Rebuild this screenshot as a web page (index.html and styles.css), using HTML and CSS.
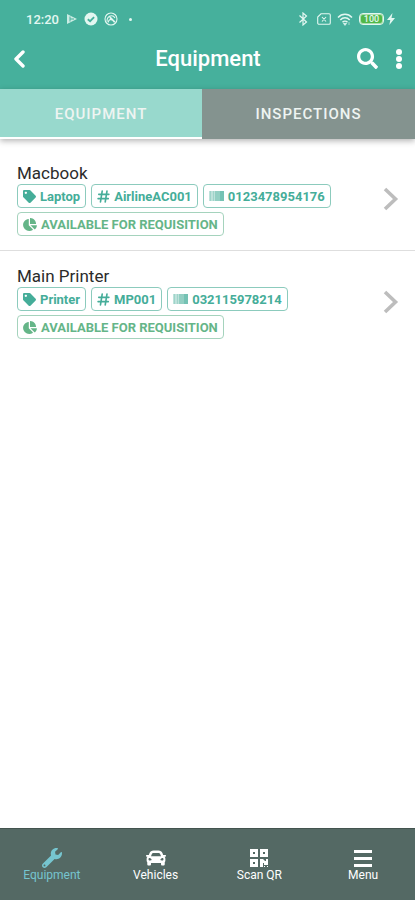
FILE: index.html
```html
<!DOCTYPE html>
<html lang="en">
<head>
<meta charset="utf-8">
<meta name="viewport" content="width=device-width, initial-scale=1">
<title>Equipment</title>
<link rel="stylesheet" href="styles.css">
</head>
<body>
<svg class="sprite" aria-hidden="true">
  <symbol id="tag" viewBox="0 0 512 512"><path d="M0 252.118V48C0 21.49 21.49 0 48 0h204.118a48 48 0 0 1 33.941 14.059l211.882 211.882c18.745 18.745 18.745 49.137 0 67.882L293.823 497.941c-18.745 18.745-49.137 18.745-67.882 0L14.059 286.059A48 48 0 0 1 0 252.118zM112 64c-26.51 0-48 21.49-48 48s21.49 48 48 48 48-21.49 48-48-21.49-48-48-48z"/></symbol>
  <symbol id="hash" viewBox="0 0 12 12"><path d="M4.8 1 3.2 11M9.2 1 7.6 11M1.6 4h9.4M1 8h9.4" fill="none" stroke="currentColor" stroke-width="1.5" stroke-linecap="round"/></symbol>
  <symbol id="barcode" viewBox="0 0 15 10"><path d="M0 0h15v10H0z" opacity=".35"/><path d="M1 0h1v10H1zM4 0h1v10H4z" opacity=".25"/><path d="M6 0h5v10H6z" opacity=".35"/><path d="M11 0h4v10h-4z" opacity=".6"/></symbol>
  <symbol id="pie" viewBox="0 0 544 512"><path d="M527.79 288H290.5l158.03 158.03c6.04 6.04 15.98 6.53 22.19.68 38.7-36.46 65.32-85.61 73.13-140.86 1.34-9.46-6.51-17.85-16.06-17.85zm-15.83-64.8C503.72 103.74 408.26 8.28 288.8.04 279.68-.59 272 7.1 272 16.24V240h223.77c9.14 0 16.82-7.68 16.19-16.8zM224 288V50.71c0-9.55-8.39-17.4-17.84-16.06C86.99 51.49-4.1 155.6.14 280.37 4.5 408.51 114.83 513.59 243.03 511.98c50.4-.63 96.97-16.87 135.26-44.03 7.9-5.6 8.42-17.23 1.57-24.08L224 288z"/></symbol>
  <symbol id="next" viewBox="0 0 16 24"><path d="M2 2l10.500 10L2 22" fill="none" stroke="currentColor" stroke-width="3.600"/></symbol>
</svg>
<div class="app">
  <header class="header">
    <div class="status">
      <span class="clock">12:20</span>
      <svg class="s-play" viewBox="0 0 12 12"><path d="M1 1l10 5-10 5z" opacity=".85"/><path d="M4 3.500v5M4 6h4" stroke="#46b09c" fill="none"/></svg>
      <svg class="s-disc" viewBox="0 0 14 14"><circle cx="7" cy="7" r="6.500"/><path d="M3.800 7.200l2.300 2 4-4" fill="none" stroke="#46b09c" stroke-width="1.800"/></svg>
      <svg class="s-disc" viewBox="0 0 14 14"><g fill="none" stroke="currentColor" stroke-width="1.100"><circle cx="7" cy="7" r="6"/><path d="M3 9.500C3 3 9 2.500 11 6M5 4l6 6M4 10.500c1-4 4-4 6.500 0"/></g><circle cx="7" cy="7" r="1.300"/></svg>
      <span class="dot"></span>
      <span class="spacer"></span>
      <svg class="s-bt" viewBox="0 0 10 14"><path d="M1.500 3.500l7 6.500L5 13V1l3.500 3-7 6.500" fill="none" stroke="currentColor" stroke-width="1.200"/></svg>
      <svg class="s-sim" viewBox="0 0 14 12"><path d="M4 .8h8a1.300 1.300 0 0 1 1.300 1.300v7.800a1.300 1.300 0 0 1-1.300 1.300H2A1.300 1.300 0 0 1 .7 9.900V4zM5 4l4 4.500M9 4L5 8.500" fill="none" stroke="currentColor" stroke-width="1.100"/></svg>
      <svg class="s-wifi" viewBox="0 0 16 13"><path d="M1 4.500C5 .3 11 .3 15 4.500M3.300 7c2.700-2.900 6.700-2.900 9.400 0M5.500 9.300c1.500-1.500 3.500-1.500 5 0" fill="none" stroke="currentColor" stroke-width="1.500"/><path d="M6.300 10.300h3.400L8 12.500zM12 9v3" stroke="currentColor" stroke-width=".6"/></svg>
      <span class="battery">100</span>
      <svg class="s-bolt" viewBox="0 0 8 12"><path d="M5.500 0L0 7h3.300L2.300 12 8 5H4.500z"/></svg>
    </div>
    <div class="bar">
      <button class="icon-btn back" aria-label="Back"><svg viewBox="0 0 12 18"><path d="M10 2L3 9l7 7" fill="none" stroke="currentColor" stroke-width="3.400" stroke-linecap="round" stroke-linejoin="round"/></svg></button>
      <h1>Equipment</h1>
      <div class="actions">
        <button class="icon-btn search" aria-label="Search"><svg viewBox="0 0 512 512"><path d="M505 442.700L405.300 343c-4.500-4.500-10.600-7-17-7H372c27.600-35.300 44-79.700 44-128C416 93.100 322.900 0 208 0S0 93.100 0 208s93.100 208 208 208c48.300 0 92.700-16.400 128-44v16.300c0 6.400 2.500 12.500 7 17l99.700 99.700c9.400 9.400 24.600 9.400 33.900 0l28.300-28.300c9.400-9.400 9.400-24.600.1-34zM208 336c-70.700 0-128-57.200-128-128 0-70.700 57.200-128 128-128 70.700 0 128 57.200 128 128 0 70.700-57.200 128-128 128z"/></svg></button>
        <button class="icon-btn more" aria-label="More"><svg viewBox="0 0 8 20"><circle cx="4" cy="3" r="3"/><circle cx="4" cy="10" r="3"/><circle cx="4" cy="17" r="3"/></svg></button>
      </div>
    </div>
  </header>
  <nav class="tabs">
    <button class="tab active">EQUIPMENT</button>
    <button class="tab">INSPECTIONS</button>
  </nav>
  <main class="list">
    <a class="item" href="#macbook">
      <div class="info">
        <h2>Macbook</h2>
        <div class="chips">
          <span class="chip"><svg class="i-tag"><use href="#tag"/></svg>Laptop</span>
          <span class="chip"><svg class="i-hash"><use href="#hash"/></svg>AirlineAC001</span>
          <span class="chip"><svg class="i-bar"><use href="#barcode"/></svg>0123478954176</span>
          <span class="chip available"><svg class="i-pie"><use href="#pie"/></svg>AVAILABLE FOR REQUISITION</span>
        </div>
      </div>
      <svg class="next"><use href="#next"/></svg>
    </a>
    <a class="item" href="#printer">
      <div class="info">
        <h2>Main Printer</h2>
        <div class="chips">
          <span class="chip"><svg class="i-tag"><use href="#tag"/></svg>Printer</span>
          <span class="chip"><svg class="i-hash"><use href="#hash"/></svg>MP001</span>
          <span class="chip"><svg class="i-bar"><use href="#barcode"/></svg>032115978214</span>
          <span class="chip available"><svg class="i-pie"><use href="#pie"/></svg>AVAILABLE FOR REQUISITION</span>
        </div>
      </div>
      <svg class="next"><use href="#next"/></svg>
    </a>
  </main>
  <nav class="bottom">
    <a class="current" href="#equipment"><svg viewBox="0 0 512 512"><path d="M507.730 109.100c-2.240-9.030-13.540-12.090-20.120-5.510l-74.360 74.360-67.880-11.310-11.310-67.880 74.360-74.360c6.620-6.620 3.430-17.900-5.660-20.160-47.380-11.740-99.550.91-136.580 37.930-39.640 39.640-50.550 97.100-34.050 147.200L18.740 402.760c-24.990 24.990-24.990 65.510 0 90.500 24.990 24.990 65.510 24.990 90.500 0l213.210-213.210c50.120 16.710 107.470 5.680 147.370-34.220 37.070-37.070 49.700-89.320 37.910-136.730zM64 472c-13.250 0-24-10.750-24-24 0-13.260 10.750-24 24-24s24 10.740 24 24c0 13.250-10.750 24-24 24z"/></svg><span>Equipment</span></a>
    <a href="#vehicles"><svg viewBox="0 0 512 512"><path d="M499.990 176h-59.870l-16.640-41.600C406.380 91.630 365.570 64 319.500 64h-127c-46.060 0-86.880 27.630-103.990 70.400L71.870 176H12.010C4.200 176-1.530 183.340.37 190.910l6 24C7.700 220.250 12.500 224 18.010 224h20.070C24.650 235.730 16 252.780 16 272v48c0 16.120 6.160 30.670 16 41.930V416c0 17.670 14.330 32 32 32h32c17.670 0 32-14.330 32-32v-32h256v32c0 17.670 14.330 32 32 32h32c17.670 0 32-14.330 32-32v-54.070c9.840-11.250 16-25.800 16-41.930v-48c0-19.220-8.650-36.270-22.070-48H494c5.510 0 10.310-3.750 11.640-9.090l6-24c1.890-7.570-3.840-14.910-11.650-14.910zm-352.060-17.830c7.290-18.220 24.940-30.170 44.570-30.170h127c19.630 0 37.280 11.950 44.570 30.170L384 208H128l19.930-49.830zM96 319.800c-19.200 0-32-12.760-32-31.900S76.800 256 96 256s48 28.710 48 47.850-28.800 15.950-48 15.950zm320 0c-19.200 0-48 3.190-48-15.950S396.800 256 416 256s32 12.760 32 31.900-12.800 31.900-32 31.900z"/></svg><span>Vehicles</span></a>
    <a href="#scan"><svg viewBox="0 0 20 20"><path fill-rule="evenodd" d="M1 1h8v8H1zM4 4v2h2V4zM11 1h8v8h-8zM14 4v2h2V4zM1 11h8v8H1zM4 14v2h2v-2zM11 11h3l2 2h1v-2h2v6h-4v-2h-1v4h-3zM15 18h1v1h-1zM18 18h1v1h-1z"/></svg><span>Scan QR</span></a>
    <a href="#menu"><svg viewBox="0 0 20 20"><path d="M1 2h18v3H1zM1 9h18v3H1zM1 16h18v3H1z"/></svg><span>Menu</span></a>
  </nav>
</div>
</body>
</html>
```
FILE: styles.css
```css
* { box-sizing: border-box; }
body { margin: 0; font-family: Roboto, "Liberation Sans", sans-serif; background: #fff; }
svg { display: block; flex: none; fill: currentColor; }
button { border: 0; padding: 0; background: none; color: inherit; font: inherit; }
a { color: inherit; text-decoration: none; }
h1, h2 { margin: 0; }
.sprite { position: absolute; width: 0; height: 0; }
.app { display: flex; flex-direction: column; min-height: 100vh; }

.header { background: #46b09c; color: #fff; }
.status { display: flex; align-items: center; height: 38px; padding: 0 20px 0 26px; color: #e3f7f1; }
.clock { font-size: 13px; font-weight: 500; }
.s-play { width: 12px; height: 12px; margin-left: 7px; }
.s-disc { width: 14px; height: 14px; margin-left: 6px; }
.dot { width: 3px; height: 3px; margin-left: 11px; border-radius: 2px; background: currentColor; }
.spacer { flex: 1; }
.s-bt { width: 10px; height: 14px; }
.s-sim { width: 14px; height: 12px; margin-left: 9px; }
.s-wifi { width: 16px; height: 13px; margin-left: 6px; }
.battery { width: 25px; height: 12px; margin-left: 6px; border: 1px solid #e3f7f1; border-radius: 4px; background: #51b848; box-shadow: inset 0 0 0 1px #a8dfae; font-size: 9px; font-weight: 500; line-height: 10px; text-align: center; }
.s-bolt { width: 8px; height: 12px; margin-left: 3px; }

.bar { display: grid; grid-template-columns: 1fr auto 1fr; align-items: center; height: 51px; padding: 0 12px 10px 13px; }
.bar h1 { font-size: 22px; font-weight: 500; line-height: 28px; }
.actions { display: flex; align-items: center; justify-content: flex-end; gap: 17px; }
.back svg { width: 12px; height: 18px; }
.search svg { width: 21px; height: 21px; }
.more svg { width: 8px; height: 20px; }

.tabs { display: flex; box-shadow: 0 2px 6px rgba(0, 0, 0, .3); }
.tab { flex: 213; height: 50px; background: #84938f; color: #eef4f2; font-size: 15px; font-weight: 500; letter-spacing: 1px; }
.tab.active { flex: 202; padding-top: 2px; border-bottom: 2px solid #fff; background: #98d9cd; }

.list { flex: 1; padding-top: 9px; }
.item { display: flex; align-items: center; justify-content: space-between; padding: 14px 16px 14px 17px; }
.item + .item { border-top: 1px solid #dedede; }
.item h2 { color: #2b2b2b; font-size: 17px; font-weight: 400; line-height: 22px; }
.info { flex: 1; }
.chips { display: flex; flex-wrap: wrap; gap: 4px 5px; }
.chip { display: flex; align-items: center; gap: 4px; height: 24px; padding: 0 5px; border: 1px solid #8ccbbd; border-radius: 4px; color: #45ad99; font-size: 13px; font-weight: 700; }
.available { border-color: #a5d3bd; color: #65b588; }
.i-tag, .i-hash { width: 13px; height: 13px; }
.i-bar { width: 15px; height: 10px; }
.i-pie { width: 14px; height: 13px; }
.next { width: 16px; height: 24px; color: #bdbdbd; }

.bottom { display: grid; grid-template-columns: repeat(4, 1fr); height: 72px; padding-top: 19px; border-top: 1px solid #43544f; background: #546964; color: #fff; }
.bottom a { display: flex; flex-direction: column; align-items: center; font-size: 12px; line-height: 14px; }
.bottom svg { width: 20px; height: 20px; }
.bottom .current { color: #76c5cf; }
```
